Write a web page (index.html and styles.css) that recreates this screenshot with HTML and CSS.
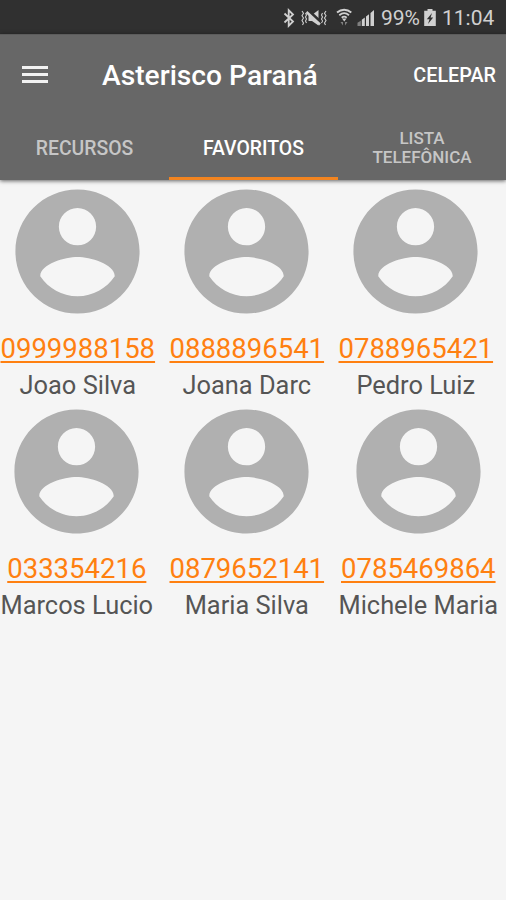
FILE: index.html
```html
<!DOCTYPE html>
<html lang="pt-BR">
<head>
    <meta charset="UTF-8">
    <meta name="viewport" content="width=device-width, initial-scale=1.0">
    <title>Asterisco Paraná</title>
    <link rel="stylesheet" href="styles.css">
</head>

<body>
    <svg class="symbols">
        <symbol id="person" viewBox="0 0 24 24">
            <path d="M12 2C6.48 2 2 6.48 2 12s4.48 10 10 10 10-4.48 10-10S17.52 2 12 2zm0 3c1.66 0 3 1.34 3 3s-1.34 3-3 3-3-1.34-3-3 1.34-3 3-3zm0 14.2c-2.5 0-4.71-1.28-6-3.22.03-1.99 4-3.08 6-3.08 1.99 0 5.97 1.09 6 3.08-1.29 1.94-3.5 3.22-6 3.22z"/>
        </symbol>
    </svg>

    <div class="status-bar">
        <!-- bluetooth, mute, wifi, signal -->
        <svg class="status-icons" width="98" height="34" viewBox="280 0 98 34">
            <path class="line" d="M284.500 13.500l8.500 8-4.300 4.300V10.200l4.300 4.300-8.500 8"/>
            <path class="line thin" d="M302 11l1.500 2.200-1.500 2.500 1.500 2.300-1.500 2.500 1.500 2.500-1 2M305.500 13l1 2-1 2 1 2-1 2 1 2M326 11l-1.500 2.200 1.500 2.500-1.500 2.300 1.500 2.500-1.500 2.500 1 2M322.500 13l-1 2 1 2-1 2 1 2-1 2"/>
            <path d="M308.500 15h3.500l6.500-5v15.500l-6.500-4.500h-3.500z"/>
            <path class="slash" d="M307.500 10.500l13 12"/>
            <path class="line bold" d="M306.500 12l13.500 12.500"/>
            <path class="line wifi" d="M337 12.500c4.300-3.700 10-3.700 14.300 0M339.300 15.200c3-2.500 6.700-2.500 9.700 0M341.700 17.700c1.600-1.300 3.400-1.300 5 0"/>
            <path d="M342 18.500h4.500l-2.250 3z"/>
            <path class="dim" d="M340.500 22h2.500v3.500zM345 22h2.500l-2.500 3.500z"/>
            <path class="dim" d="M357.500 26v-3.200l3.300-2V26z"/>
            <path d="M361.800 26v-6.200l3-2.200V26zM366 26v-9.500l3-2.200V26zM370.500 26V13l3.500-3v16z"/>
        </svg>
        <span class="percent">99%</span>
        <svg class="battery" width="12" height="34" viewBox="424 0 12 34">
            <path d="M427.500 9h5v1.800h3.300V26h-11.600V10.800h3.300z"/>
            <path class="bolt" d="M432 13l-5.200 6.300h2.700l-1.500 4.700 5.200-6.500h-2.600z"/>
        </svg>
        <span class="clock">11:04</span>
    </div>

    <header>
        <div class="toolbar">
            <div class="menu"><i></i><i></i><i></i></div>
            <h1>Asterisco Paraná</h1>
            <span class="action">CELEPAR</span>
        </div>
        <nav class="tabs">
            <div class="tab">RECURSOS</div>
            <div class="tab active">FAVORITOS</div>
            <div class="tab small">LISTA<br>TELEFÔNICA</div>
        </nav>
    </header>

    <main class="contacts">
        <div class="contact">
            <svg class="avatar"><use href="#person"/></svg>
            <a class="phone">0999988158</a>
            <span class="name">Joao Silva</span>
        </div>
        <div class="contact">
            <svg class="avatar"><use href="#person"/></svg>
            <a class="phone">0888896541</a>
            <span class="name">Joana Darc</span>
        </div>
        <div class="contact">
            <svg class="avatar"><use href="#person"/></svg>
            <a class="phone">0788965421</a>
            <span class="name">Pedro Luiz</span>
        </div>
        <div class="contact">
            <svg class="avatar"><use href="#person"/></svg>
            <a class="phone">033354216</a>
            <span class="name">Marcos Lucio</span>
        </div>
        <div class="contact">
            <svg class="avatar"><use href="#person"/></svg>
            <a class="phone">0879652141</a>
            <span class="name">Maria Silva</span>
        </div>
        <div class="contact">
            <svg class="avatar"><use href="#person"/></svg>
            <a class="phone">0785469864</a>
            <span class="name">Michele Maria</span>
        </div>
    </main>
</body>
</html>
```
FILE: styles.css
```css
* {
    box-sizing: border-box;
}
body {
    margin: 0;
    height: 900px;
    overflow: hidden;
    background: #f5f5f5;
    font-family: Roboto, sans-serif;
}
.symbols {
    display: none;
}

.status-bar {
    display: flex;
    align-items: center;
    height: 34px;
    padding-left: 280px;
    background: #303030;
    color: #d0d0d0;
    font-size: 21px;
    line-height: 34px;
    white-space: nowrap;
}
.status-bar svg {
    flex: none;
    fill: #d0d0d0;
}
.status-bar .line {
    fill: none;
    stroke: #d0d0d0;
    stroke-width: 1.8;
}
.status-bar .thin {
    stroke-width: 1.1;
}
.status-bar .bold {
    stroke-width: 2.4;
}
.status-bar .wifi {
    stroke-width: 1.8;
}
.status-bar .slash {
    fill: none;
    stroke: #303030;
    stroke-width: 4;
}
.status-bar .dim {
    fill: #808080;
}
.status-bar .bolt {
    fill: #303030;
}
.percent {
    width: 43px;
    margin-left: 3px;
    padding-top: 2px;
}
.battery {
    margin-right: 6px;
}
.clock {
    padding-top: 2px;
}

header {
    height: 146px;
    background: #676767;
    border-top: 1px solid #5c5c5c;
    box-shadow: 0 1px 4px rgba(0, 0, 0, 0.6);
}
.toolbar {
    display: flex;
    align-items: center;
    height: 79px;
    padding: 0 10px 0 21.5px;
    color: #fff;
}
.menu {
    display: flex;
    flex-direction: column;
    gap: 4px;
    width: 26px;
    margin-right: 54.5px;
}
.menu i {
    height: 3px;
    background: #f2f2f2;
}
h1 {
    flex: 1;
    margin: 0;
    padding-top: 2px;
    font-size: 28.2px;
    font-weight: 500;
    white-space: nowrap;
}
.action {
    padding-top: 2px;
    font-size: 19.8px;
    font-weight: 500;
}

.tabs {
    display: grid;
    grid-template-columns: 169px 169px 168px;
    height: 66px;
}
.tab {
    display: flex;
    align-items: center;
    justify-content: center;
    padding-top: 5px;
    border-bottom: 3px solid transparent;
    color: #c6c6c6;
    font-size: 19.4px;
    font-weight: 500;
    text-align: center;
}
.active {
    border-color: #f28420;
    color: #fff;
}
.small {
    padding-top: 4px;
    font-size: 17px;
    line-height: 19px;
}

.contacts {
    display: grid;
    grid-template-columns: 169px 169px 168px;
    grid-auto-rows: 220px;
    justify-items: start;
    margin: -3.5px 0 0 0.5px;
}
.contact {
    display: flex;
    flex-direction: column;
    align-items: center;
    white-space: nowrap;
}
.avatar {
    flex: none;
    width: 149px;
    height: 149px;
    fill: #b0b0b0;
}
.phone {
    margin-top: 5.5px;
    color: #ff8010;
    font-size: 27.5px;
    line-height: 36px;
    text-decoration: underline;
    text-decoration-thickness: 2px;
    text-underline-offset: 3px;
}
.name {
    color: #555;
    font-size: 25.4px;
    line-height: 36px;
}
```
